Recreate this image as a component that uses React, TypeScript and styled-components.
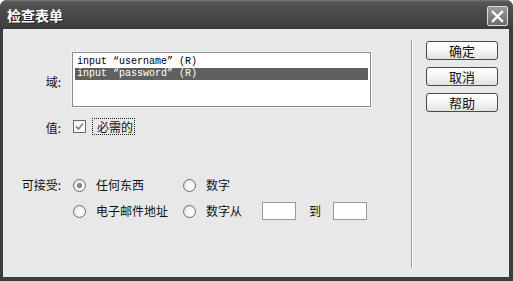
import React from "react";
import styled, { createGlobalStyle } from "styled-components";

const GlobalStyle = createGlobalStyle`
  html, body {
    margin: 0;
    padding: 0;
    background: #ffffff;
  }
  body {
    font-family: "Noto Sans CJK SC", "Noto Sans", sans-serif;
  }
`;

const CJK = `"Noto Sans CJK SC", "Noto Sans", sans-serif`;

const App = () => {
  return (
    <>
      <GlobalStyle />
      <Window>
        <TitleBar>
          <Title>检查表单</Title>
          <CloseButton>
            <svg width="13" height="13" viewBox="0 0 13 13">
              <path d="M2 2 L11 11 M11 2 L2 11" stroke="#ffffff" strokeWidth="2.4" strokeLinecap="square" />
            </svg>
          </CloseButton>
        </TitleBar>
        <Body>
          <Main>
            <ListRow>
              <Label>域:</Label>
              <ListBox>
                <ListItem>input “username” (R)</ListItem>
                <ListItem selected>input “password” (R)</ListItem>
              </ListBox>
            </ListRow>
            <ValueRow>
              <Label>值:</Label>
              <CheckBox>
                <svg width="11" height="11" viewBox="0 0 11 11">
                  <path d="M2 5.5 L4.5 8 L9 2.5" stroke="#8a8a8a" strokeWidth="1.8" fill="none" />
                </svg>
              </CheckBox>
              <FocusLabel>必需的</FocusLabel>
            </ValueRow>
            <AcceptRow>
              <Label>可接受:</Label>
              <OptionGrid>
                <Option>
                  <Radio checked />
                  <OptionText>任何东西</OptionText>
                </Option>
                <Option>
                  <Radio />
                  <OptionText>数字</OptionText>
                </Option>
                <Option>
                  <Radio />
                  <OptionText>电子邮件地址</OptionText>
                </Option>
                <Option>
                  <Radio />
                  <OptionText>数字从</OptionText>
                  <NumberBox />
                  <ToText>到</ToText>
                  <NumberBox />
                </Option>
              </OptionGrid>
            </AcceptRow>
          </Main>
          <Sidebar>
            <Button>确定</Button>
            <Button>取消</Button>
            <Button>帮助</Button>
          </Sidebar>
        </Body>
      </Window>
    </>
  );
};

export default App;

const Window = styled.div`
  width: 513px;
  height: 281px;
  display: flex;
  flex-direction: column;
  background: #3c3c3c;
  border-radius: 7px 7px 0 0;
  overflow: hidden;
`;

const TitleBar = styled.div`
  height: 29px;
  flex-shrink: 0;
  display: flex;
  align-items: center;
  justify-content: space-between;
  padding: 0 5px 0 7px;
  background: linear-gradient(#7a7a7a 0, #565656 2px, #4c4c4c 10px, #444444 22px, #3a3a3a 29px);
`;

const Title = styled.div`
  font-family: ${CJK};
  font-weight: 700;
  font-size: 14px;
  line-height: 16px;
  color: #ffffff;
  text-shadow: 1px 1px 0 #222222;
  margin-top: 1px;
`;

const CloseButton = styled.div`
  width: 19px;
  height: 18px;
  border: 1px solid #dcdcdc;
  border-radius: 2px;
  background: linear-gradient(#9a9a9a, #6a6a6a);
  display: flex;
  align-items: center;
  justify-content: center;
  margin-top: 3px;
`;

const Body = styled.div`
  flex: 1;
  margin: 0 4px 4px 3px;
  background: #e8e8e8;
  display: flex;
`;

const Main = styled.div`
  flex: 1;
  display: flex;
  flex-direction: column;
  padding-top: 23px;
`;

const Label = styled.div`
  width: 58px;
  margin-right: 11px;
  flex-shrink: 0;
  text-align: right;
  font-family: ${CJK};
  font-size: 12px;
  line-height: 16px;
  color: #111111;
`;

const ListRow = styled.div`
  display: flex;
  align-items: center;
  height: 54px;

  ${Label} {
    padding-top: 6px;
  }
`;

const ListBox = styled.div`
  width: 293px;
  height: 50px;
  border: 1px solid #8c8c8c;
  box-shadow: inset 0 0 0 1px #ffffff, 0 0 0 1px #f4f4f4;
  background: #ffffff;
  padding: 3px 2px 0 2px;
  box-sizing: content-box;
`;

const ListItem = styled.div<{ selected?: boolean }>`
  height: 12px;
  padding-left: 2px;
  font-family: "Liberation Mono", "DejaVu Sans Mono", monospace;
  font-size: 10px;
  line-height: 12px;
  white-space: pre;
  color: ${(p) => (p.selected ? "#ffffff" : "#000000")};
  background: ${(p) => (p.selected ? "#606060" : "transparent")};
`;

const ValueRow = styled.div`
  display: flex;
  align-items: center;
  height: 17px;
  margin-top: 12px;

  ${Label} {
    padding-top: 3px;
  }
`;

const CheckBox = styled.div`
  width: 11px;
  height: 11px;
  margin-left: 1px;
  border: 1px solid #6a6a6a;
  background: linear-gradient(135deg, #f0f0f0, #ffffff);
  display: flex;
  align-items: center;
  justify-content: center;
`;

const FocusLabel = styled.div`
  margin-left: 6px;
  padding: 0 1px 0 4px;
  height: 15px;
  border: 1px dotted #222222;
  font-family: ${CJK};
  font-size: 12px;
  line-height: 15px;
  color: #111111;
`;

const AcceptRow = styled.div`
  display: flex;
  align-items: flex-start;
  margin-top: 41px;

  ${Label} {
    line-height: 18px;
  }
`;

const OptionGrid = styled.div`
  display: grid;
  grid-template-columns: 110px auto;
  row-gap: 8px;
`;

const Option = styled.div`
  display: flex;
  align-items: center;
  height: 18px;
`;

const Radio = styled.div<{ checked?: boolean }>`
  width: 11px;
  height: 11px;
  margin-left: 1px;
  border-radius: 50%;
  border: 1px solid #6e6e6e;
  background: radial-gradient(circle at 60% 60%, #ffffff 0, #f4f4f4 45%, #d4d4d4 100%);
  display: flex;
  align-items: center;
  justify-content: center;

  &::after {
    content: "";
    display: ${(p) => (p.checked ? "block" : "none")};
    width: 5px;
    height: 5px;
    border-radius: 50%;
    background: radial-gradient(circle, #999999 0, #666666 100%);
  }
`;

const OptionText = styled.div`
  margin-left: 10px;
  font-family: ${CJK};
  font-size: 12px;
  line-height: 16px;
  color: #111111;
  white-space: nowrap;
`;

const NumberBox = styled.div`
  width: 32px;
  height: 16px;
  margin-left: 20px;
  border: 1px solid #9a9a9a;
  background: #ffffff;
`;

const ToText = styled.div`
  margin-left: 13px;
  width: 24px;
  font-family: ${CJK};
  font-size: 12px;
  line-height: 16px;
  color: #111111;
  & + ${NumberBox} {
    margin-left: 0;
  }
`;

const Sidebar = styled.div`
  width: 83px;
  margin: 11px 0 9px 0;
  border-left: 1px solid #9c9c9c;
  box-shadow: inset 1px 0 0 #ffffff;
  padding: 1px 0 0 14px;
  display: flex;
  flex-direction: column;
  gap: 7px;
`;

const Button = styled.div`
  width: 70px;
  height: 17px;
  border: 1px solid #4a4a4a;
  border-radius: 3px;
  background: linear-gradient(#ffffff 0, #f6f6f6 50%, #e0e0e0 100%);
  display: flex;
  align-items: center;
  justify-content: center;
  font-family: ${CJK};
  font-size: 13px;
  line-height: 15px;
  color: #111111;
`;
